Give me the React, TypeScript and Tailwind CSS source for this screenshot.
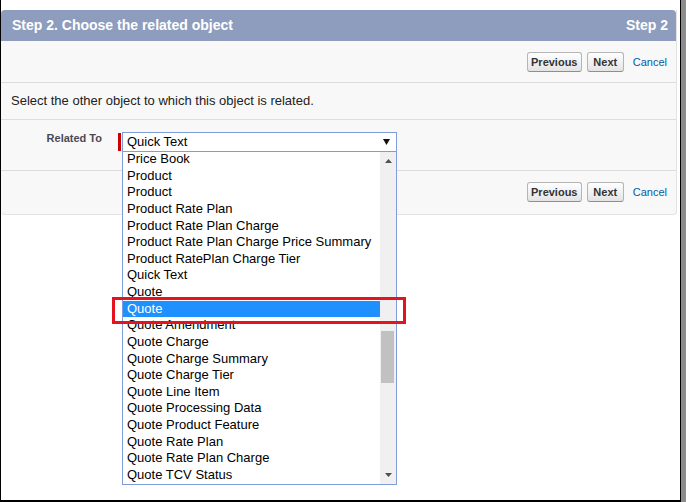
const items = [
  "Price Book",
  "Product",
  "Product",
  "Product Rate Plan",
  "Product Rate Plan Charge",
  "Product Rate Plan Charge Price Summary",
  "Product RatePlan Charge Tier",
  "Quick Text",
  "Quote",
  "Quote",
  "Quote Amendment",
  "Quote Charge",
  "Quote Charge Summary",
  "Quote Charge Tier",
  "Quote Line Item",
  "Quote Processing Data",
  "Quote Product Feature",
  "Quote Rate Plan",
  "Quote Rate Plan Charge",
  "Quote TCV Status",
];

function Buttons() {
  const btn =
    "h-[20px] px-[3px] border border-[#b5b5b5] border-b-[#8e8e8e] rounded-[3px] bg-gradient-to-b from-white to-[#e4e4e4] text-[11px] font-bold text-[#333] leading-none";
  return (
    <div className="flex items-center justify-end pr-[9px]">
      <button className={`${btn} w-[55px]`}>Previous</button>
      <button className={`${btn} w-[37px] ml-[5px]`}>Next</button>
      <a className="ml-[9px] text-[11px] text-[#015ba7]">Cancel</a>
    </div>
  );
}

function Triangle({ up }: { up?: boolean }) {
  return (
    <svg width="7" height="4" viewBox="0 0 7 4" className="block">
      <path d={up ? "M0 4 L3.5 0 L7 4 Z" : "M0 0 L7 0 L3.5 4 Z"} fill="#505050" />
    </svg>
  );
}

export default function App() {
  return (
    <div
      className="flex w-[686px] h-[502px] bg-white overflow-hidden"
      style={{ fontFamily: '"Liberation Sans", Arial, sans-serif' }}
    >
      <div className="w-[681px] h-full border-l border-r border-b-2 border-black pt-[10px] pr-[3px]">
        <div className="bg-[#f8f8f8] border-b border-r border-[#e3e3e3] rounded-b-[4px]">
          {/* Header */}
          <div className="h-[31px] bg-[#8e9dbe] rounded-t-[4px] flex items-center justify-between pl-[11px] pr-[8px] text-white text-[14px] font-bold">
            <span>Step 2. Choose the related object</span>
            <span>Step 2</span>
          </div>

          {/* Top buttons */}
          <div className="h-[42px] pt-[11px] border-b border-[#dddddd]">
            <Buttons />
          </div>

          {/* Description */}
          <div className="h-[37px] flex items-center pl-[10px] border-b border-[#dddddd] text-[13px] text-[#222]">
            Select the other object to which this object is related.
          </div>

          {/* Related To row */}
          <div className="h-[51px] pt-[12px] border-b border-[#dddddd] flex items-start">
            <div className="w-[101px] text-right text-[11px] font-bold text-[#4a4a56] -mt-[2px]">
              Related To
            </div>
            <div className="ml-[16px] mt-[1px] w-[3px] h-[18px] bg-[#c00]" />
            <div className="relative ml-[1px] w-[275px] h-[20px]">
              <div className="h-[20px] border border-[#7f9ddb] bg-white flex items-center justify-between pl-[4px] pr-[6px] text-[13px] text-black">
                <span>Quick Text</span>
                <svg width="7" height="6" viewBox="0 0 7 6" className="block">
                  <path d="M0 0 L7 0 L3.5 6 Z" fill="#111" />
                </svg>
              </div>

              {/* Open dropdown list */}
              <div className="absolute left-0 top-full w-[275px] h-[333px] z-10 bg-white border-l border-r border-b border-[#7f9ddb] flex overflow-hidden">
                <div className="w-[257px] overflow-hidden">
                  <div className="-mt-[1px]">
                    {items.map((it, i) => (
                      <div
                        key={i}
                        className={`h-[16.63px] leading-[16.63px] pl-[4px] text-[13px] whitespace-nowrap ${
                          i === 9 ? "bg-[#1e90ff] text-white" : "text-black"
                        }`}
                      >
                        {it}
                      </div>
                    ))}
                  </div>
                </div>
                <div className="w-[16px] bg-[#f0f0f0] flex flex-col items-center">
                  <div className="h-[16px] flex items-center justify-center pt-[2px]">
                    <Triangle up />
                  </div>
                  <div className="flex-1 w-full px-[1px] pt-[163px]">
                    <div className="h-[52px] w-[13px] bg-[#c1c1c1]" />
                  </div>
                  <div className="h-[16px] flex items-center justify-center pb-[2px]">
                    <Triangle />
                  </div>
                </div>
              </div>
              {/* Red highlight around selected option */}
              <div className="absolute z-20 left-[-10px] top-[165px] w-[294px] h-[27px] border-[3px] border-[#e3131f]" />
            </div>
          </div>

          {/* Bottom buttons */}
          <div className="h-[43px] pt-[11px]">
            <Buttons />
          </div>
        </div>
      </div>
      <div className="w-[5px] h-full bg-[#8c8c8c]" />
    </div>
  );
}
